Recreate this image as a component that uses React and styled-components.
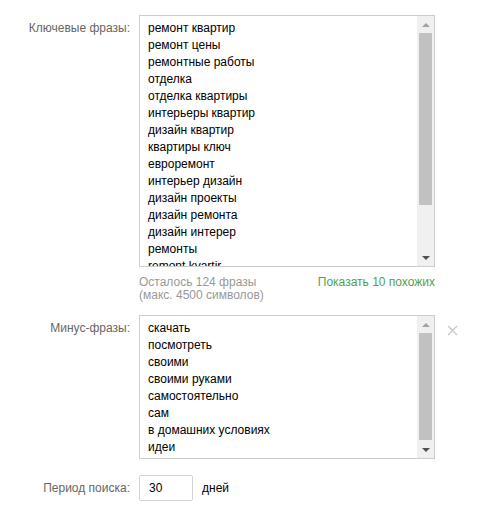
import React from 'react';
import styled, { createGlobalStyle } from 'styled-components';

const GlobalStyle = createGlobalStyle`
  html, body {
    margin: 0;
    padding: 0;
    background: #ffffff;
  }
  body {
    font-family: "Liberation Sans", Arial, sans-serif;
    font-size: 12px;
    color: #000;
  }
`;

const Form = styled.div`
  display: flex;
  flex-direction: column;
  padding-top: 15px;
`;

const Row = styled.div`
  display: flex;
  align-items: ${props => props.$align || 'flex-start'};
  margin-top: ${props => props.$mt || 0}px;
`;

const Label = styled.div`
  width: 130px;
  margin-right: 9px;
  flex-shrink: 0;
  text-align: right;
  color: #666666;
  line-height: 17px;
  padding-top: ${props => props.$pt || 0}px;
`;

const Field = styled.div`
  width: 296px;
  display: flex;
  flex-direction: column;
`;

const Box = styled.div`
  display: flex;
  box-sizing: border-box;
  height: ${props => props.$h}px;
  border: 1px solid #cdcdcd;
  background: #fff;
`;

const Lines = styled.div`
  flex: 1;
  overflow: hidden;
  padding: 4px 8px;
  line-height: 17px;
  color: #000;
  white-space: nowrap;
`;

const Scrollbar = styled.div`
  width: 17px;
  flex-shrink: 0;
  display: flex;
  flex-direction: column;
  background: #f0f0f0;
`;

const Arrow = styled.div`
  height: 17px;
  flex-shrink: 0;
  display: flex;
  align-items: center;
  justify-content: center;
  &::after {
    content: '';
    width: 0;
    height: 0;
    border-left: 4px solid transparent;
    border-right: 4px solid transparent;
    ${props => props.$down
      ? `border-top: 4px solid ${props.$color};`
      : `border-bottom: 4px solid ${props.$color};`}
  }
`;

const Track = styled.div`
  flex: 1;
  padding: 0 2px;
`;

const Thumb = styled.div`
  height: ${props => props.$h}px;
  background: #c1c1c1;
`;

const Hints = styled.div`
  display: flex;
  justify-content: space-between;
  margin-top: 9px;
  line-height: 13px;
`;

const Muted = styled.div`
  color: #999999;
`;

const GreenLink = styled.a`
  color: #4f9f4f;
  text-decoration: none;
  cursor: pointer;
`;

const Remove = styled.div`
  margin-left: 12px;
  padding-top: 10px;
  line-height: 0;
`;

const SmallInput = styled.div`
  box-sizing: border-box;
  width: 54px;
  height: 26px;
  border: 1px solid #d3d3d3;
  border-radius: 2px;
  padding: 0 9px;
  line-height: 24px;
  text-align: left;
  color: #000;
`;

const Unit = styled.span`
  margin-left: 9px;
  color: #000;
`;

const keywords = [
  'ремонт квартир',
  'ремонт цены',
  'ремонтные работы',
  'отделка',
  'отделка квартиры',
  'интерьеры квартир',
  'дизайн квартир',
  'квартиры ключ',
  'евроремонт',
  'интерьер дизайн',
  'дизайн проекты',
  'дизайн ремонта',
  'дизайн интерер',
  'ремонты',
  'remont kvartir',
];

const minus = [
  'скачать',
  'посмотреть',
  'своими',
  'своими руками',
  'самостоятельно',
  'сам',
  'в домашних условиях',
  'идеи',
];

function ScrollList({ items, height, thumb }) {
  return (
    <Box $h={height}>
      <Lines>
        {items.map((t, i) => <div key={i}>{t}</div>)}
      </Lines>
      <Scrollbar>
        <Arrow $color="#a3a3a3" />
        <Track>
          <Thumb $h={thumb} />
        </Track>
        <Arrow $down $color="#505050" />
      </Scrollbar>
    </Box>
  );
}

export default function App() {
  return (
    <Form>
      <GlobalStyle />
      <Row>
        <Label $pt={5}>Ключевые фразы:</Label>
        <Field>
          <ScrollList items={keywords} height={252} thumb={172} />
          <Hints>
            <Muted>
              Осталось 124 фразы
              <br />
              (макс. 4500 символов)
            </Muted>
            <GreenLink>Показать 10 похожих</GreenLink>
          </Hints>
        </Field>
      </Row>

      <Row $mt={13}>
        <Label $pt={5}>Минус-фразы:</Label>
        <Field>
          <ScrollList items={minus} height={144} thumb={107} />
        </Field>
        <Remove>
          <svg width="11" height="11" viewBox="0 0 11 11">
            <path d="M1 1L10 10M10 1L1 10" stroke="#c8c8c8" strokeWidth="1.4" fill="none" />
          </svg>
        </Remove>
      </Row>

      <Row $mt={16} $align="center">
        <Label>Период поиска:</Label>
        <SmallInput>30</SmallInput>
        <Unit>дней</Unit>
      </Row>
    </Form>
  );
}
